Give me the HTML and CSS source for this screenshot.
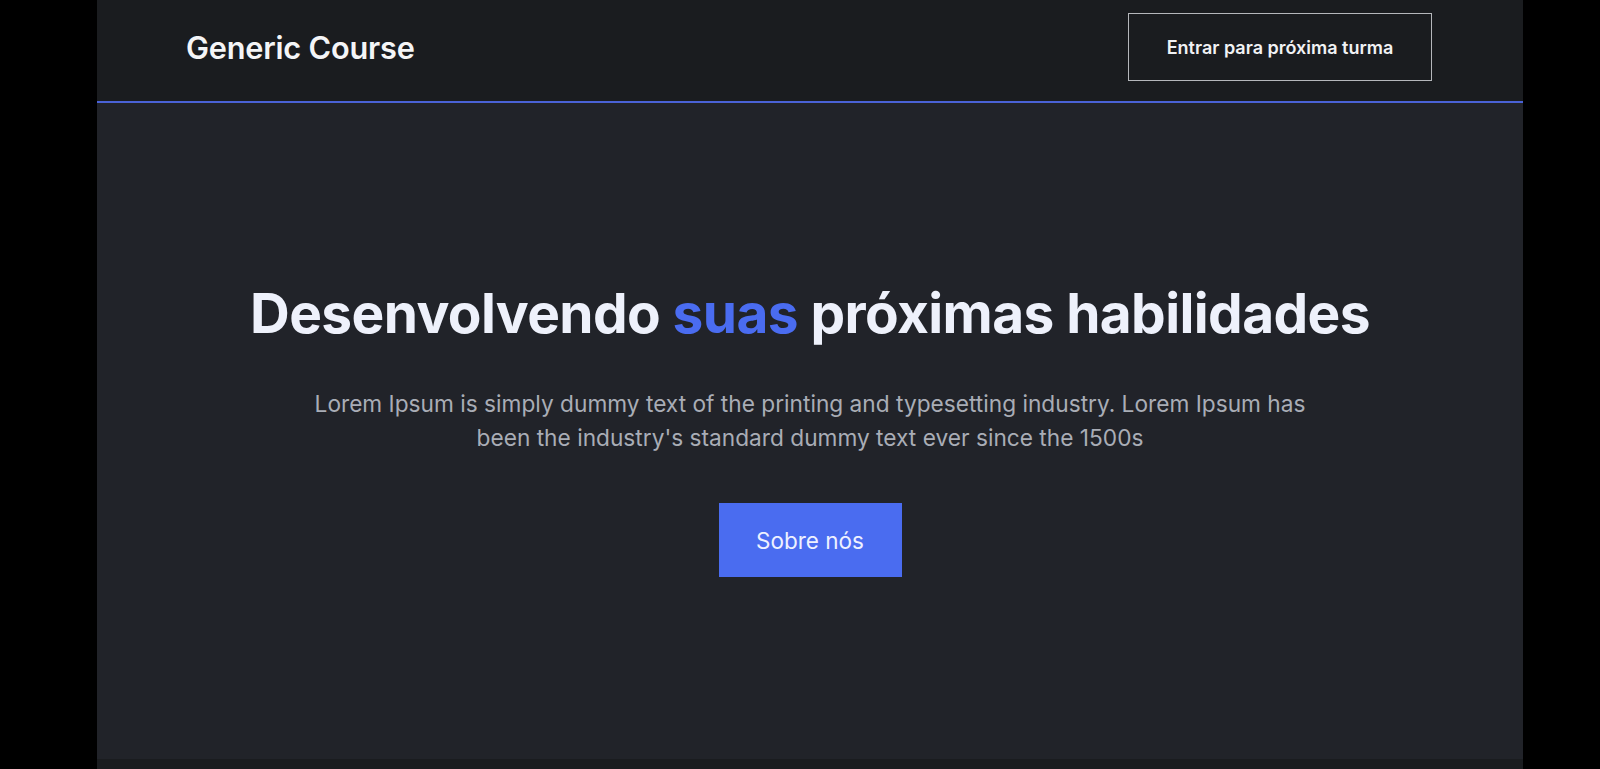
FILE: index.html
```html
<!DOCTYPE html>
<html lang="pt-BR">
<head>
<meta charset="utf-8">
<title>Generic Course</title>
<link rel="stylesheet" href="styles.css">
</head>
<body>
<div class="page">
  <header class="header">
    <div class="logo">Generic Course</div>
    <a class="cta-outline" href="#">Entrar para próxima turma</a>
  </header>
  <main class="hero">
    <h1 class="hero-title">Desenvolvendo <span class="accent">suas</span> próximas habilidades</h1>
    <p class="hero-text">Lorem Ipsum is simply dummy text of the printing and typesetting industry. Lorem Ipsum has been the industry's standard dummy text ever since the 1500s</p>
    <a class="cta-primary" href="#">Sobre nós</a>
  </main>
  <div class="next-section"></div>
</div>
</body>
</html>
```

FILE: styles.css
```css
* { box-sizing: border-box; }

html, body {
  margin: 0;
  padding: 0;
  background: #000;
  height: 100%;
  overflow: hidden;
}

body {
  font-family: Inter, "Noto Sans", sans-serif;
  display: flex;
}

.page {
  width: 1426px;
  margin-left: 97px;
  display: flex;
  flex-direction: column;
  height: 769px;
}

.header {
  height: 103px;
  flex: none;
  background: #1a1c1f;
  border-bottom: 2px solid #4a62d6;
  display: flex;
  align-items: center;
  justify-content: space-between;
  padding: 0 91px 7px 89px;
}

.logo {
  color: #f4f5f7;
  font-size: 30.7px;
  font-weight: 600;
  letter-spacing: -0.2px;
}

.cta-outline {
  width: 304px;
  height: 68px;
  border: 1.5px solid #b5b7bb;
  display: flex;
  align-items: center;
  justify-content: center;
  color: #f1f2f4;
  font-size: 18px;
  font-weight: 600;
  text-decoration: none;
}

.hero {
  flex: none;
  height: 656px;
  background: #212329;
  display: flex;
  flex-direction: column;
  align-items: center;
  justify-content: center;
  text-align: center;
  padding-bottom: 5px;
}

.hero-title {
  margin: 0;
  font-size: 55px;
  font-weight: 700;
  color: #eef1fb;
  letter-spacing: -0.6px;
}

.accent { color: #4a6cf0; }

.hero-text {
  margin: 41px 0 48px;
  max-width: 1030px;
  font-size: 22.7px;
  line-height: 34px;
  color: #a9adb6;
}

.cta-primary {
  width: 183px;
  height: 74px;
  background: #4a6cf0;
  color: #eef1ff;
  font-size: 22.5px;
  display: flex;
  align-items: center;
  justify-content: center;
  text-decoration: none;
}

.next-section {
  flex: 1;
  background: #1a1c1f;
}
```
